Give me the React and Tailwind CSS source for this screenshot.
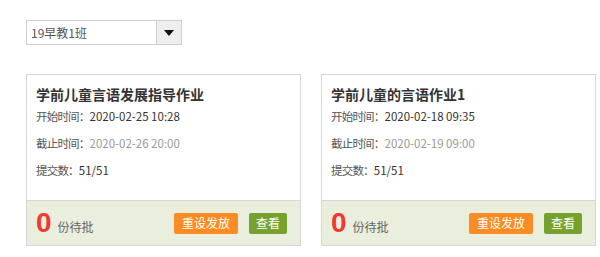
export default function App() {
  const works = [
    { title: "学前儿童言语发展指导作业", start: "2020-02-25 10:28", end: "2020-02-26 20:00", count: "51/51" },
    { title: "学前儿童的言语作业1", start: "2020-02-18 09:35", end: "2020-02-19 09:00", count: "51/51" },
  ];

  return (
    <div
      className="w-[600px] h-[257px] bg-white pl-[26px] pt-[20px]"
      style={{ fontFamily: '"Noto Sans CJK SC", "Noto Sans", sans-serif' }}
    >
      {/* class select */}
      <div className="flex w-[156px] h-[25px] border border-[#cfcfcf]">
        <div className="flex-1 flex items-center pl-[4px] text-[12px] text-[#555]">19早教1班</div>
        <div className="w-[25px] flex items-center justify-center border-l border-[#cfcfcf] bg-[#eeeeee]">
          <svg width="10" height="6" viewBox="0 0 10 6">
            <path d="M0 0 L10 0 L5 6 Z" fill="#111" />
          </svg>
        </div>
      </div>

      {/* cards */}
      <div className="flex gap-[20px] mt-[29px]">
        {works.map((w, i) => (
          <div key={i} className="w-[275px] h-[172px] border border-[#d6d6d6] flex flex-col">
            <div className="flex-1 px-[9px] pt-[9px] bg-white">
              <div className="text-[14px] leading-[20px] font-bold text-[#333]">{w.title}</div>
              <div className="-mt-[1px] text-[11.5px] leading-[27px] text-[#555]">
                <div>
                  <span className="tracking-[-0.8px]">开始时间：</span>
                  <span className="text-[#333]">{w.start}</span>
                </div>
                <div>
                  <span className="tracking-[-0.8px]">截止时间：</span>
                  <span className="text-[#999]">{w.end}</span>
                </div>
                <div>
                  <span className="tracking-[-0.8px]">提交数：</span>
                  <span className="text-[#333]">{w.count}</span>
                </div>
              </div>
            </div>
            <div className="h-[45px] border-t border-[#d6d6d6] bg-[#e9eedd] flex items-center pl-[9px] pr-[13px]">
              <span className="text-[28px] leading-none font-bold text-[#f3382f]" style={{ fontFamily: '"Liberation Sans", Arial, sans-serif' }}>0</span>
              <span className="ml-[6px] mt-[8px] text-[12px] text-[#666]">份待批</span>
              <div className="ml-auto flex gap-[11px]">
                <button className="w-[64px] h-[21px] rounded-[2px] bg-[#fa8c23] text-white text-[12px] leading-none">重设发放</button>
                <button className="w-[38px] h-[21px] rounded-[2px] bg-[#77a12d] text-white text-[12px] leading-none">查看</button>
              </div>
            </div>
          </div>
        ))}
      </div>
    </div>
  );
}
